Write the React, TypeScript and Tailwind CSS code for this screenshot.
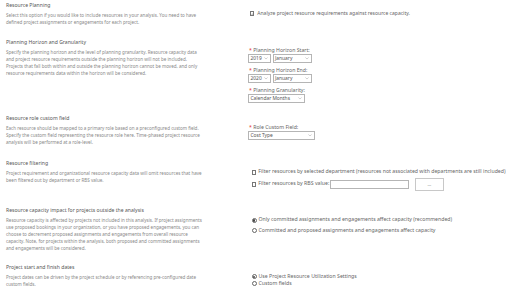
import React from 'react'

// 资源规划设置页（缩小版）

const Chevron = () => (
  <svg viewBox="0 0 10 6" className="w-[4px] h-[2.5px]" fill="none" stroke="#888" strokeWidth="1">
    <path d="M1 1 L5 5 L9 1" />
  </svg>
)

const Select = ({ value, className }: { value: string; className: string }) => (
  <div className={`h-[9px] border-[0.5px] border-[#b5b5b5] bg-white flex items-center justify-between pl-[1.5px] pr-[2px] text-[4.9px] text-[#555] ${className}`}>
    <span className="whitespace-nowrap">{value}</span>
    <Chevron />
  </div>
)

const Label = ({ text }: { text: string }) => (
  <div className="h-[7px] leading-[7px] text-[5.2px] text-[#666] whitespace-nowrap pl-[1px]">
    <span className="text-[#e03030]">*</span> {text}
  </div>
)

const Checkbox = ({ checked = false }: { checked?: boolean }) => (
  <span className="w-[4.8px] h-[4.8px] border-[0.5px] border-[#777] bg-white inline-flex items-center justify-center shrink-0">
    {checked && (
      <svg viewBox="0 0 10 10" className="w-[3.8px] h-[3.8px]" fill="none" stroke="#444" strokeWidth="1.6">
        <path d="M1.5 5 L4 7.5 L8.5 2.5" />
      </svg>
    )}
  </span>
)

const Radio = ({ checked = false }: { checked?: boolean }) => (
  <span className="w-[5px] h-[5px] rounded-full border-[0.5px] border-[#666] bg-white inline-flex items-center justify-center shrink-0">
    {checked && <span className="w-[2.6px] h-[2.6px] rounded-full bg-[#444]" />}
  </span>
)

interface SectionProps {
  title: string
  lines: string[]
  className: string
  rightClass: string
  children: React.ReactNode
}

const Section = ({ title, lines, className, rightClass, children }: SectionProps) => (
  <div className={`flex ${className}`}>
    <div className="w-[248px] shrink-0 pl-[6px]">
      <div className="h-[7px] leading-[7px] text-[5.1px] text-[#555] whitespace-nowrap">{title}</div>
      <div className="mt-[3px] text-[4.55px] leading-[7px] text-[#888]">
        {lines.map((l, i) => (
          <div key={i} className="h-[7px] whitespace-nowrap">{l}</div>
        ))}
      </div>
    </div>
    <div className={`flex-1 ${rightClass}`}>{children}</div>
  </div>
)

const rowText = 'text-[5.2px] text-[#666] whitespace-nowrap'

export default function App() {
  return (
    <div className="w-[520px] h-[291px] overflow-hidden bg-white pt-[2px] font-['Segoe_UI','Noto_Sans',sans-serif]">
      <Section
        title="Resource Planning"
        lines={[
          'Select this option if you would like to include resources in your analysis. You need to have',
          'defined project assignments or engagements for each project.',
        ]}
        className="mb-[13px]"
        rightClass="pt-[8px]"
      >
        <div className="h-[7px] flex items-center gap-[3px] pl-[1.5px] text-[5px] text-[#666] whitespace-nowrap">
          <Checkbox checked />
          <span>Analyze project resource requirements against resource capacity.</span>
        </div>
      </Section>

      <Section
        title="Planning Horizon and Granularity"
        lines={[
          'Specify the planning horizon and the level of planning granularity. Resource capacity data',
          'and project resource requirements outside the planning horizon will not be included.',
          'Projects that fall both within and outside the planning horizon cannot be moved, and only',
          'resource requirements data within the horizon will be considered.',
        ]}
        className="mb-[12px]"
        rightClass="pt-[8px]"
      >
        <Label text="Planning Horizon Start:" />
        <div className="flex gap-[1.5px]">
          <Select value="2019" className="w-[23px]" />
          <Select value="January" className="w-[39px]" />
        </div>
        <div className="mt-[4px]">
          <Label text="Planning Horizon End:" />
        </div>
        <div className="flex gap-[1.5px]">
          <Select value="2020" className="w-[23px]" />
          <Select value="January" className="w-[39px]" />
        </div>
        <div className="mt-[4px]">
          <Label text="Planning Granularity:" />
        </div>
        <Select value="Calendar Months" className="w-[57px]" />
      </Section>

      <Section
        title="Resource role custom field"
        lines={[
          'Each resource should be mapped to a primary role based on a preconfigured custom field.',
          'Specify the custom field representing the resource role here. Time-phased project resource',
          'analysis will be performed at a role-level.',
        ]}
        className="mb-[14px]"
        rightClass="pt-[8.7px]"
      >
        <Label text="Role Custom Field:" />
        <Select value="Cost Type" className="w-[67px]" />
      </Section>

      <Section
        title="Resource filtering"
        lines={[
          'Project requirement and organizational resource capacity data will omit resources that have',
          'been filtered out by department or RBS value.',
        ]}
        className="mb-[16px]"
        rightClass="pt-[8.7px]"
      >
        <div className={`h-[7px] flex items-center gap-[2px] pl-[3.5px] ${rowText}`}>
          <Checkbox />
          <span>Filter resources by selected department (resources not associated with departments are still included)</span>
        </div>
        <div className={`mt-[2px] h-[13.4px] flex items-center pl-[3.5px] ${rowText}`}>
          <Checkbox />
          <span className="ml-[2px]">Filter resources by RBS value:</span>
          <div className="ml-[1px] w-[79px] h-[9.3px] border-[0.5px] border-[#b5b5b5] bg-white" />
          <div className="ml-[5.5px] w-[29px] h-[13.4px] border-[0.5px] border-[#c8c8c8] bg-white flex items-center justify-center text-[4.5px] text-[#777]">
            ...
          </div>
        </div>
      </Section>

      <Section
        title="Resource capacity impact for projects outside the analysis"
        lines={[
          'Resource capacity is affected by projects not included in this analysis. If project assignments',
          'use proposed bookings in your organization, or you have proposed engagements, you can',
          'choose to decrement proposed assignments and engagements from overall resource',
          'capacity. Note, for projects within the analysis, both proposed and committed assignments',
          'and engagements will be considered.',
        ]}
        className="mb-[12.3px]"
        rightClass="pt-[9.7px]"
      >
        <div className={`h-[7px] flex items-center gap-[2px] pl-[3.5px] ${rowText}`}>
          <Radio checked />
          <span>Only committed assignments and engagements affect capacity (recommended)</span>
        </div>
        <div className={`mt-[3.6px] h-[7px] flex items-center gap-[2px] pl-[3.5px] ${rowText}`}>
          <Radio />
          <span>Committed and proposed assignments and engagements affect capacity</span>
        </div>
      </Section>

      <Section
        title="Project start and finish dates"
        lines={[
          'Project dates can be driven by the project schedule or by referencing pre-configured date',
          'custom fields.',
        ]}
        className=""
        rightClass="pt-[9px]"
      >
        <div className={`h-[7px] flex items-center gap-[2px] pl-[3.5px] ${rowText}`}>
          <Radio checked />
          <span>Use Project Resource Utilization Settings</span>
        </div>
        <div className={`h-[7px] flex items-center gap-[2px] pl-[3.5px] ${rowText}`}>
          <Radio />
          <span>Custom fields</span>
        </div>
      </Section>
    </div>
  )
}
